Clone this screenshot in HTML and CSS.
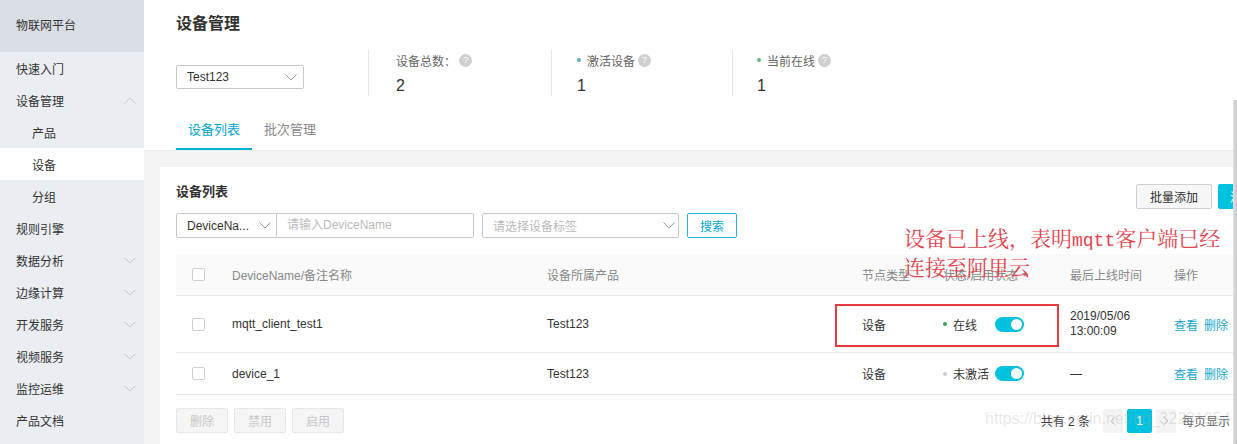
FILE: index.html
```html
<!DOCTYPE html>
<html lang="zh-CN">
<head>
<meta charset="utf-8">
<title>设备管理</title>
<link rel="stylesheet" href="styles.css">
</head>
<body>
<div class="app">
  <aside class="sidebar">
    <div class="brand">物联网平台</div>
    <ul class="menu">
      <li class="item">快速入门</li>
      <li class="item">设备管理<svg class="chev" width="12" height="7" viewBox="0 0 12 7"><polyline points="0.5,6.5 6,1 11.5,6.5"/></svg></li>
      <li class="item sub">产品</li>
      <li class="item sub active">设备</li>
      <li class="item sub">分组</li>
      <li class="item">规则引擎</li>
      <li class="item">数据分析<svg class="chev" width="12" height="7" viewBox="0 0 12 7"><polyline points="0.5,0.5 6,6 11.5,0.5"/></svg></li>
      <li class="item">边缘计算<svg class="chev" width="12" height="7" viewBox="0 0 12 7"><polyline points="0.5,0.5 6,6 11.5,0.5"/></svg></li>
      <li class="item">开发服务<svg class="chev" width="12" height="7" viewBox="0 0 12 7"><polyline points="0.5,0.5 6,6 11.5,0.5"/></svg></li>
      <li class="item">视频服务<svg class="chev" width="12" height="7" viewBox="0 0 12 7"><polyline points="0.5,0.5 6,6 11.5,0.5"/></svg></li>
      <li class="item">监控运维<svg class="chev" width="12" height="7" viewBox="0 0 12 7"><polyline points="0.5,0.5 6,6 11.5,0.5"/></svg></li>
      <li class="item">产品文档</li>
    </ul>
  </aside>

  <main class="main">
    <section class="top">
      <h1 class="title">设备管理</h1>
      <div class="stats">
        <div class="product-select">
          <span>Test123</span>
          <svg class="sel-chev" width="12" height="7" viewBox="0 0 12 7"><polyline points="0.5,0.5 6,6 11.5,0.5"/></svg>
        </div>
        <div class="stat stat-1">
          <div class="stat-label">设备总数：<span class="help">?</span></div>
          <div class="stat-num">2</div>
        </div>
        <div class="stat stat-2">
          <div class="stat-label"><span class="dot dot-blue"></span>激活设备<span class="help">?</span></div>
          <div class="stat-num">1</div>
        </div>
        <div class="stat stat-3">
          <div class="stat-label"><span class="dot dot-green"></span>当前在线<span class="help">?</span></div>
          <div class="stat-num">1</div>
        </div>
      </div>
      <div class="tabs">
        <div class="tab active">设备列表</div>
        <div class="tab">批次管理</div>
      </div>
    </section>

    <section class="card">
      <div class="card-head">
        <div class="card-title">设备列表</div>
        <div class="head-btns">
          <button class="btn btn-default">批量添加</button>
          <button class="btn btn-primary">添加设备</button>
        </div>
      </div>

      <div class="filters">
        <div class="fsel">
          <span>DeviceNa...</span>
          <svg class="sel-chev" width="12" height="7" viewBox="0 0 12 7"><polyline points="0.5,0.5 6,6 11.5,0.5"/></svg>
        </div>
        <div class="finput">请输入DeviceName</div>
        <div class="ftag">
          <span>请选择设备标签</span>
          <svg class="sel-chev" width="12" height="7" viewBox="0 0 12 7"><polyline points="0.5,0.5 6,6 11.5,0.5"/></svg>
        </div>
        <button class="btn-search">搜索</button>
      </div>

      <div class="table">
        <div class="tr thead">
          <div class="td"><span class="cb"></span></div>
          <div class="td">DeviceName/备注名称</div>
          <div class="td">设备所属产品</div>
          <div class="td">节点类型</div>
          <div class="td">状态/启用状态 <svg class="caret" width="6" height="4" viewBox="0 0 6 4"><polygon points="0,0 6,0 3,4"/></svg></div>
          <div class="td">最后上线时间</div>
          <div class="td">操作</div>
        </div>
        <div class="tr row-tall">
          <div class="td"><span class="cb"></span></div>
          <div class="td">mqtt_client_test1</div>
          <div class="td">Test123</div>
          <div class="td">设备</div>
          <div class="td status"><span class="st"><span class="dot dot-online"></span>在线</span><span class="switch"><span class="knob"></span></span></div>
          <div class="td date">2019/05/06<br>13:00:09</div>
          <div class="td ops"><a>查看</a><a>删除</a></div>
        </div>
        <div class="tr">
          <div class="td"><span class="cb"></span></div>
          <div class="td">device_1</div>
          <div class="td">Test123</div>
          <div class="td">设备</div>
          <div class="td status"><span class="st"><span class="dot dot-off"></span>未激活</span><span class="switch"><span class="knob"></span></span></div>
          <div class="td">—</div>
          <div class="td ops"><a>查看</a><a>删除</a></div>
        </div>
      </div>

      <div class="footer">
        <div class="batch">
          <button class="btn-dis">删除</button>
          <button class="btn-dis">禁用</button>
          <button class="btn-dis">启用</button>
        </div>
        <div class="pager">
          <span class="total">共有 2 条</span>
          <span class="pg pg-nav"><svg width="6" height="10" viewBox="0 0 6 10"><polyline points="5.5,0.5 1,5 5.5,9.5"/></svg></span>
          <span class="pg pg-cur">1</span>
          <span class="pg pg-nav"><svg width="6" height="10" viewBox="0 0 6 10"><polyline points="0.5,0.5 5,5 0.5,9.5"/></svg></span>
          <span class="per">每页显示</span>
          <span class="per-sel">10</span>
        </div>
      </div>
    </section>
  </main>

  <div class="mark-box"></div>
  <div class="mark-text">设备已上线，表明<span class="mono">mqtt</span>客户端已经<br>连接至阿里云</div>
  <div class="watermark">https://blog.csdn.net/qq_32281954</div>
  <div class="edge"></div>
</div>
</body>
</html>
```

FILE: styles.css
```css
* { box-sizing: border-box; }
html, body { margin: 0; padding: 0; }
body {
  font-family: "Liberation Sans", Arial, "Noto Sans CJK SC", sans-serif;
  font-size: 12px;
  color: #333;
  background: #f3f3f4;
  overflow: hidden;
  width: 1237px;
  height: 444px;
}
button { font-family: inherit; font-size: 12px; margin: 0; cursor: pointer; }

.app {
  position: relative;
  display: flex;
  width: 1237px;
  height: 444px;
  overflow: hidden;
}

/* sidebar */
.sidebar {
  flex: 0 0 144px;
  width: 144px;
  background: #eaedf1;
}
.brand {
  height: 52px;
  line-height: 52px;
  padding-left: 16px;
  background: #d9dee5;
  color: #333;
}
.menu { list-style: none; margin: 0; padding: 0; }
.item {
  height: 32px;
  display: flex;
  align-items: center;
  justify-content: space-between;
  padding: 0 8px 0 16px;
  color: #333;
}
.item.sub { padding-left: 32px; }
.item.active { background: #fff; }
.chev { fill: none; stroke: #c4c8cc; stroke-width: 1; }

/* main */
.main {
  flex: 1 1 auto;
  min-width: 0;
  background: #f3f3f4;
}
.top {
  background: #fff;
  padding: 0 32px;
  border-bottom: 1px solid #ececec;
}
.title {
  margin: 0;
  height: 48px;
  line-height: 48px;
  font-size: 16px;
  font-weight: bold;
  color: #333;
}
.stats {
  display: flex;
  margin-top: 2px;
  height: 46px;
}
.product-select {
  margin-top: 15px;
  margin-right: 64px;
  width: 128px;
  height: 24px;
  border: 1px solid #c9c9c9;
  border-radius: 2px;
  padding: 0 6px 0 10px;
  display: flex;
  align-items: center;
  justify-content: space-between;
  color: #333;
}
.sel-chev { fill: none; stroke: #999; stroke-width: 1; }
.stat {
  border-left: 1px solid #e6e6e6;
  height: 46px;
}
.stat-1 { width: 183px; padding-left: 27px; }
.stat-2 { width: 181px; padding-left: 25px; }
.stat-3 { width: 181px; padding-left: 24px; }
.stat-label {
  height: 20px;
  display: flex;
  align-items: center;
  color: #666;
}
.help {
  display: inline-block;
  width: 13px;
  height: 13px;
  border-radius: 50%;
  background: #cfcfcf;
  color: #fff;
  font-size: 9px;
  line-height: 13px;
  text-align: center;
  margin-left: 3px;
}
.dot {
  display: inline-block;
  width: 4px;
  height: 4px;
  border-radius: 50%;
  margin-right: 6px;
}
.dot-blue { background: #5bb2cc; }
.dot-green { background: #6ab87a; }
.dot-online { background: #3aa35a; }
.dot-off { background: #cccccc; }
.stat-num {
  margin-top: 4px;
  line-height: 24px;
  font-size: 16px;
  color: #333;
}
.tabs {
  display: flex;
  margin-top: 16px;
  height: 38px;
}
.tab {
  height: 38px;
  line-height: 36px;
  padding: 0 12px;
  font-size: 13px;
  color: #888;
  border-bottom: 2px solid transparent;
}
.tab.active { color: #00a8d0; border-bottom-color: #00b4d6; }

/* card */
.card {
  margin: 16px 0 0 16px;
  width: 1146px;
  background: #fff;
  padding: 17px 16px 0;
  height: 300px;
}
.card-head {
  display: flex;
  justify-content: space-between;
  align-items: flex-start;
  height: 25px;
}
.card-title {
  font-size: 13px;
  font-weight: bold;
  line-height: 18px;
  margin-top: -1px;
  color: #333;
}
.head-btns { display: flex; gap: 6px; }
.btn {
  height: 25px;
  padding: 0;
  border-radius: 2px;
}
.btn-default {
  width: 76px;
  background: #f7f7f7;
  border: 1px solid #cfcfcf;
  color: #333;
}
.btn-primary {
  width: 72px;
  background: #00c1de;
  border: 1px solid #00c1de;
  color: #fff;
}
.filters {
  display: flex;
  margin-top: 4px;
  height: 25px;
}
.fsel {
  width: 101px;
  height: 25px;
  border: 1px solid #c9c9c9;
  border-radius: 2px 0 0 2px;
  display: flex;
  align-items: center;
  justify-content: space-between;
  padding: 0 5px 0 10px;
  color: #333;
}
.finput {
  width: 197px;
  height: 25px;
  border: 1px solid #c9c9c9;
  border-left: none;
  border-radius: 0 2px 2px 0;
  padding-left: 10px;
  line-height: 23px;
  color: #bbb;
}
.ftag {
  margin-left: 8px;
  width: 197px;
  height: 25px;
  border: 1px solid #c9c9c9;
  border-radius: 2px;
  display: flex;
  align-items: center;
  justify-content: space-between;
  padding: 0 3px 0 10px;
  color: #bbb;
}
.btn-search {
  margin-left: 8px;
  width: 50px;
  height: 25px;
  background: #fff;
  border: 1px solid #20b9d4;
  border-radius: 2px;
  color: #00a8d0;
  padding: 0;
}

/* table */
.table { margin-top: 16px; }
.tr {
  display: grid;
  grid-template-columns: 40px 315px 315px 81px 127px 104px 1fr;
  align-items: center;
  height: 42px;
  border-bottom: 1px solid #e8e8e8;
}
.tr.thead {
  background: #fafafa;
  color: #888;
}
.tr.row-tall { height: 57px; }
.td {
  padding-left: 16px;
  display: flex;
  align-items: center;
  white-space: nowrap;
}
.caret { fill: #999; margin-left: 4px; }
.cb {
  display: inline-block;
  width: 13px;
  height: 13px;
  border: 1px solid #cfcfcf;
  border-radius: 2px;
  background: #fff;
}
.st {
  width: 52px;
  display: flex;
  align-items: center;
}
.switch {
  position: relative;
  display: inline-block;
  width: 29px;
  height: 15px;
  border-radius: 8px;
  background: #00c1de;
}
.knob {
  position: absolute;
  top: 2px;
  right: 2px;
  width: 11px;
  height: 11px;
  border-radius: 50%;
  background: #fff;
}
.date {
  display: block;
  line-height: 15px;
}
.ops { gap: 6px; }
.ops a { color: #1aa7cf; }

/* footer */
.footer {
  display: flex;
  justify-content: space-between;
  align-items: center;
  margin-top: 13px;
  height: 25px;
}
.batch { display: flex; gap: 6px; }
.btn-dis {
  width: 52px;
  height: 25px;
  padding: 0;
  background: #f5f5f5;
  border: 1px solid #e8e8e8;
  border-radius: 2px;
  color: #c8c8c8;
}
.pager {
  display: flex;
  align-items: center;
  color: #333;
}
.total { margin-right: 13px; }
.pg {
  height: 24px;
  display: inline-flex;
  align-items: center;
  justify-content: center;
  border-radius: 2px;
}
.pg-nav {
  width: 20px;
  background: #f4f4f4;
}
.pg-nav svg { fill: none; stroke: #c8c8c8; stroke-width: 1; }
.pg-cur {
  width: 25px;
  margin: 0 4px;
  background: #00c1de;
  color: #fff;
}
.per { margin-left: 6px; color: #666; }
.per-sel {
  margin-left: 8px;
  width: 52px;
  height: 24px;
  border: 1px solid #c9c9c9;
  border-radius: 2px;
  padding-left: 8px;
  line-height: 22px;
}

/* overlays (annotation on top of screenshot) */
.mark-box {
  position: absolute;
  left: 835px;
  top: 304px;
  width: 224px;
  height: 43px;
  border: 2px solid #e63a3f;
}
.mark-text {
  position: absolute;
  left: 904px;
  top: 225px;
  font-family: "Noto Serif CJK SC", "Liberation Serif", "Noto Sans CJK SC", serif;
  font-size: 21px;
  line-height: 25px;
  color: #e5414c;
  white-space: nowrap;
}
.mark-text .mono {
  font-family: "Liberation Mono", monospace;
  font-size: 18px;
}
.watermark {
  position: absolute;
  left: 985px;
  top: 410px;
  font-size: 16px;
  color: rgba(170, 170, 170, 0.28);
  white-space: nowrap;
}
.edge {
  position: absolute;
  right: 0;
  top: 100px;
  bottom: 0;
  width: 4px;
  background: linear-gradient(to right, #e2e2e2, #c6c6c6);
}
```
